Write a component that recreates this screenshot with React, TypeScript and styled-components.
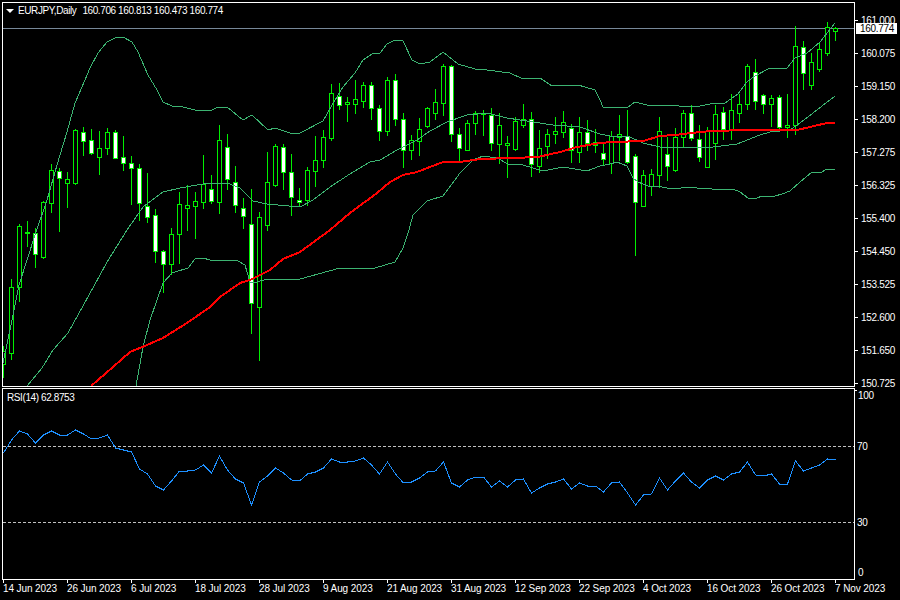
import React from "react";
import styled, { createGlobalStyle } from "styled-components";

// all chart coordinates below are page pixels, the svg viewBoxes start at the panel's inner corner
const STEP = 8;
const candleX = (i: number) => 3 + STEP * i;

// body top, body bottom, high, low, filled (1 = white bear candle)
type Candle = [number, number, number, number, number];

const candles: Candle[] = [
  [351, 364, 346, 377, 0], [287, 353, 279, 359, 0], [226, 287, 224, 301, 0], [232, 233, 221, 246, 1],
  [233, 254, 228, 267, 1], [202, 257, 201, 258, 0], [170, 203, 164, 212, 0], [171, 178, 168, 231, 1],
  [179, 183, 172, 207, 0], [130, 183, 129, 184, 0], [132, 141, 127, 155, 1], [140, 153, 129, 154, 1],
  [148, 157, 131, 174, 0], [132, 148, 128, 154, 0], [132, 158, 130, 158, 1], [157, 163, 136, 170, 1],
  [163, 168, 156, 204, 1], [168, 203, 164, 220, 1], [206, 217, 173, 222, 1], [215, 251, 209, 262, 1],
  [251, 264, 250, 292, 1], [234, 264, 228, 274, 0], [204, 234, 192, 263, 0], [205, 208, 185, 230, 0],
  [201, 206, 192, 238, 0], [184, 202, 155, 208, 0], [189, 201, 175, 203, 1], [140, 202, 125, 213, 0],
  [147, 179, 134, 189, 1], [182, 205, 166, 212, 1], [208, 216, 198, 228, 1], [224, 303, 189, 333, 1],
  [217, 307, 212, 360, 0], [182, 225, 152, 230, 0], [146, 185, 144, 186, 0], [147, 172, 144, 189, 1],
  [172, 197, 154, 215, 1], [200, 202, 188, 206, 1], [170, 200, 167, 205, 0], [160, 171, 136, 186, 0],
  [137, 160, 130, 167, 0], [93, 138, 84, 140, 0], [96, 105, 83, 109, 1], [102, 104, 97, 121, 0],
  [99, 104, 80, 113, 0], [85, 101, 82, 107, 0], [85, 108, 82, 119, 1], [108, 131, 105, 140, 1],
  [80, 131, 77, 135, 0], [80, 119, 74, 125, 1], [119, 150, 113, 167, 1], [140, 150, 135, 159, 0],
  [129, 141, 118, 155, 0], [108, 126, 107, 127, 0], [102, 113, 89, 119, 0], [66, 103, 64, 115, 0],
  [66, 134, 65, 141, 1], [134, 148, 128, 161, 1], [123, 150, 120, 150, 0], [113, 123, 111, 134, 0],
  [113, 114, 110, 135, 1], [115, 143, 108, 150, 1], [125, 144, 113, 163, 0], [143, 145, 136, 177, 0],
  [121, 149, 117, 150, 0], [119, 125, 104, 127, 0], [119, 164, 112, 176, 1], [148, 166, 130, 172, 0],
  [134, 146, 129, 158, 0], [131, 134, 117, 143, 0], [122, 132, 111, 137, 0], [128, 150, 124, 162, 1],
  [132, 152, 117, 162, 0], [132, 143, 120, 150, 1], [142, 145, 129, 152, 0], [153, 159, 142, 165, 1],
  [136, 163, 131, 173, 0], [134, 137, 115, 160, 0], [136, 162, 110, 163, 1], [156, 202, 154, 255, 1],
  [175, 206, 170, 206, 0], [174, 186, 169, 195, 0], [131, 175, 117, 187, 0], [154, 166, 137, 180, 1],
  [137, 170, 128, 171, 0], [113, 137, 110, 147, 0], [113, 138, 105, 140, 1], [139, 157, 125, 161, 1],
  [131, 167, 127, 167, 0], [114, 143, 105, 159, 0], [112, 129, 107, 139, 1], [110, 130, 94, 139, 0],
  [104, 113, 94, 122, 0], [66, 104, 64, 109, 0], [72, 101, 59, 109, 1], [95, 104, 94, 113, 1],
  [98, 104, 95, 126, 0], [97, 127, 95, 129, 1], [125, 127, 94, 137, 0], [46, 125, 26, 134, 0],
  [47, 73, 41, 89, 1], [62, 85, 53, 89, 0], [49, 69, 43, 71, 0], [27, 53, 22, 55, 0],
  [28, 31, 27, 40, 0],
];

const upperBand =
  "3,363 11,325 19,285 35,235 47,200 57,165 67,132 75,103 82,87 90,68 98,53 107,42 115,38 123,37 132,42 138,52 148,75 157,90 163,102 172,106 183,107 195,110 210,111 218,107 227,107 243,120 252,115 268,130 275,128 290,133 300,133 323,121 332,105 343,87 355,73 363,60 372,54 380,53 387,44 395,40 403,41 412,60 420,64 430,62 443,52 458,64 475,69 487,70 510,73 523,79 540,78 552,86 578,85 595,90 600,100 603,107 628,107 635,102 647,105 660,105 670,105 687,107 700,106 715,103 725,103 738,94 747,82 755,76 770,68 787,68 795,58 807,53 820,42 835,23";

const middleBand =
  "27,386 42,368 53,350 68,333 78,315 100,275 107,262 127,230 143,207 152,200 163,192 180,188 203,184 227,183 240,188 253,201 267,204 300,207 313,200 333,185 353,172 370,162 380,160 397,150 417,140 430,131 447,122 467,115 487,113 507,118 533,122 553,125 580,127 600,134 610,136 630,137 643,143 660,147 683,148 713,147 737,144 760,135 770,132 790,130 800,123 813,113 835,96";

const lowerBand =
  "136,386 143,347 150,320 163,283 172,273 188,268 195,259 203,258 210,260 238,261 245,265 250,282 257,282 267,279 278,280 300,279 340,268 375,268 395,262 403,248 409,230 413,215 427,201 443,196 460,173 473,160 483,156 497,158 508,164 523,165 543,171 563,167 587,171 600,166 610,164 617,162 627,166 633,178 638,182 648,186 662,187 672,189 690,187 697,188 712,189 733,189 740,192 748,198 757,198 762,196 775,196 782,194 790,191 800,182 812,172 820,173 827,169 835,169";

const movingAverage =
  "91,386 113,367 130,352 147,345 163,338 187,323 210,307 220,297 240,283 250,280 270,270 283,259 300,252 330,230 350,213 377,193 390,182 403,175 417,172 443,162 460,162 480,159 513,158 538,157 560,152 577,147 600,143 613,142 643,141 660,136 675,135 700,132 713,131 747,130 797,130 810,127 827,123 835,123";

// rsi value per candle, already in page pixels
const rsiLine = [
  453, 440, 431, 434, 443, 435, 431, 435, 435, 430, 434, 439, 438, 435, 448, 450, 452, 469, 474, 486,
  490, 481, 471, 471, 470, 465, 473, 456, 470, 479, 483, 505, 482, 476, 468, 473, 480, 481, 474, 472,
  468, 459, 462, 462, 461, 458, 465, 474, 462, 474, 483, 482, 478, 472, 471, 462, 483, 487, 480, 477,
  477, 487, 481, 487, 480, 479, 493, 488, 484, 482, 479, 489, 483, 486, 486, 492, 483, 482, 493, 505,
  495, 494, 478, 490, 481, 473, 482, 488, 480, 476, 480, 474, 472, 462, 475, 476, 474, 484, 484, 461,
  471, 468, 465, 459, 460,
];

const priceLabels = [
  "161.000", "160.075", "159.150", "158.200", "157.275", "156.325",
  "155.400", "154.450", "153.525", "152.600", "151.650", "150.725",
];

const rsiLabels = [
  { text: "100", top: 1, inset: 3 },
  { text: "70", top: 37, inset: 2 },
  { text: "30", top: 62, inset: 2 },
  { text: "0", top: 36, inset: 3 },
];

const dates = [
  "14 Jun 2023", "26 Jun 2023", "6 Jul 2023", "18 Jul 2023", "28 Jul 2023", "9 Aug 2023", "21 Aug 2023",
  "31 Aug 2023", "12 Sep 2023", "22 Sep 2023", "4 Oct 2023", "16 Oct 2023", "26 Oct 2023", "7 Nov 2023",
];

const GlobalStyle = createGlobalStyle`
  html, body {
    margin: 0;
    background: #000;
  }
`;

const Screen = styled.div`
  width: 900px;
  height: 600px;
  padding: 2px 0 0 2px;
  box-sizing: border-box;
  background: #000;
  color: #fff;
  font-family: "Liberation Sans", Arial, sans-serif;
  font-size: 10px;
  line-height: 11px;
  overflow: hidden;
`;

const MainRow = styled.div`
  display: flex;
  height: 385px;
  margin-bottom: 1px;
`;

const SubRow = styled.div`
  display: flex;
  height: 192px;
`;

const Panel = styled.div`
  position: relative;
  flex: none;
  width: 853px;
  box-sizing: border-box;
  border: 1px solid #fff;

  svg {
    display: block;
  }
`;

const Legend = styled.div`
  position: absolute;
  top: 2px;
  left: 3px;
  display: flex;
  align-items: center;
  white-space: nowrap;
  letter-spacing: -0.4px;
`;

const DropArrow = styled.span`
  width: 0;
  height: 0;
  margin-right: 4px;
  border-left: 4px solid transparent;
  border-right: 4px solid transparent;
  border-top: 4px solid #fff;
`;

const Symbol = styled.span`
  margin-right: 6px;
`;

const RsiName = styled.div`
  position: absolute;
  top: 3px;
  left: 4px;
  letter-spacing: -0.4px;
`;

const PriceAxis = styled.div`
  position: relative;
  padding-top: 2px;
  letter-spacing: -0.3px;
`;

const PriceRow = styled.div`
  display: flex;
  align-items: center;
  height: 33px;

  &::before {
    content: "";
    width: 3px;
    height: 1px;
    margin-right: 3px;
    background: #fff;
  }
`;

const LastPrice = styled.div`
  position: absolute;
  top: 21px;
  left: 1px;
  width: 41px;
  height: 11px;
  padding-left: 4px;
  box-sizing: border-box;
  background: #fff;
  color: #000;
`;

const RsiAxis = styled.div`
  position: relative;
  display: flex;
  flex-direction: column;
  letter-spacing: -0.3px;

  &::before {
    content: "";
    position: absolute;
    top: 2px;
    left: 0;
    width: 2px;
    height: 1px;
    background: #fff;
  }
`;

const RsiRow = styled.div<{ $top: number; $inset: number }>`
  height: 14px;
  line-height: 14px;
  margin-top: ${(p) => p.$top}px;
  padding-left: ${(p) => p.$inset}px;
`;

const TimeAxis = styled.div`
  display: flex;
  padding-left: 1px;
  letter-spacing: -0.1px;
`;

const TimeCell = styled.div`
  display: flex;
  flex-direction: column;
  flex: none;
  width: 64px;
  white-space: nowrap;
`;

const TimeTick = styled.span`
  width: 1px;
  height: 3px;
  background: #fff;
`;

const CandleGroup = ({ candle, x }: { candle: Candle; x: number }) => {
  const [top, bottom, high, low, filled] = candle;
  return (
    <g stroke="#00f000">
      <line x1={x + 0.5} x2={x + 0.5} y1={high} y2={low + 1} />
      <rect
        x={x - 1.5}
        y={top + 0.5}
        width={4}
        height={bottom - top}
        fill={filled ? "#fff" : "#000"}
      />
    </g>
  );
};

const PriceChart = () => (
  <svg width={851} height={383} viewBox="3 3 851 383" shapeRendering="crispEdges" fill="none">
    <line x1={3} x2={854} y1={28.5} y2={28.5} stroke="#778899" />
    {candles.map((c, i) => (
      <CandleGroup key={i} candle={c} x={candleX(i)} />
    ))}
    <polyline points={upperBand} stroke="#3cb371" />
    <polyline points={middleBand} stroke="#3cb371" />
    <polyline points={lowerBand} stroke="#3cb371" />
    <polyline points={movingAverage} stroke="#ff0000" strokeWidth={2} />
  </svg>
);

const RsiChart = () => (
  <svg width={851} height={190} viewBox="3 389 851 190" shapeRendering="crispEdges" fill="none">
    <line x1={3} x2={854} y1={446.5} y2={446.5} stroke="#c0c0c0" strokeDasharray="3 2" />
    <line x1={3} x2={854} y1={522.5} y2={522.5} stroke="#c0c0c0" strokeDasharray="3 2" />
    <polyline
      points={rsiLine.map((y, i) => `${candleX(i) + 0.5},${y}`).join(" ")}
      stroke="#1e90ff"
    />
  </svg>
);

export default function App() {
  return (
    <>
      <GlobalStyle />
      <Screen>
        <MainRow>
          <Panel>
            <PriceChart />
            <Legend>
              <DropArrow />
              <Symbol>EURJPY,Daily</Symbol>
              160.706 160.813 160.473 160.774
            </Legend>
          </Panel>
          <PriceAxis>
            {priceLabels.map((label) => (
              <PriceRow key={label}>{label}</PriceRow>
            ))}
            <LastPrice>160.774</LastPrice>
          </PriceAxis>
        </MainRow>
        <SubRow>
          <Panel>
            <RsiChart />
            <RsiName>RSI(14) 62.8753</RsiName>
          </Panel>
          <RsiAxis>
            {rsiLabels.map((r) => (
              <RsiRow key={r.text} $top={r.top} $inset={r.inset}>
                {r.text}
              </RsiRow>
            ))}
          </RsiAxis>
        </SubRow>
        <TimeAxis>
          {dates.map((d) => (
            <TimeCell key={d}>
              <TimeTick />
              {d}
            </TimeCell>
          ))}
        </TimeAxis>
      </Screen>
    </>
  );
}
